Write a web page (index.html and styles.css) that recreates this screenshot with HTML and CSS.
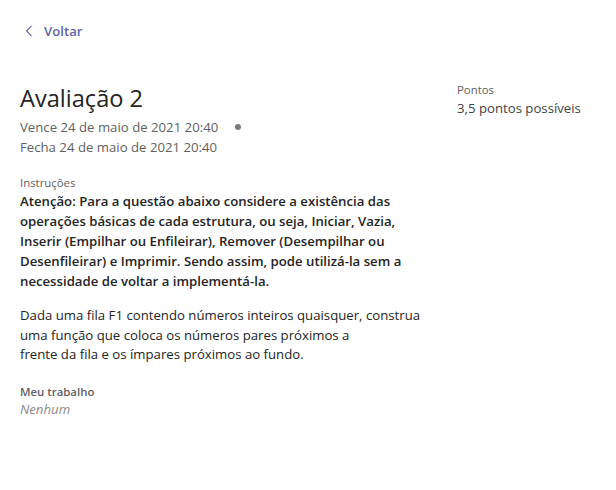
FILE: index.html
```html
<!DOCTYPE html>
<html lang="pt">
<head>
<meta charset="utf-8">
<link rel="stylesheet" href="styles.css">
</head>
<body>
<div class="page">
  <a class="back" href="#">
    <svg class="chev" width="8" height="12" viewBox="0 0 8 12"><path d="M6.5 0.8 L1.6 6 L6.5 11.2" fill="none" stroke="#6264a7" stroke-width="1.1"/></svg>
    <span>Voltar</span>
  </a>
  <div class="layout">
    <main class="main">
      <h1 class="title">Avaliação 2</h1>
      <div class="meta">
        <div class="meta-row">Vence 24 de maio de 2021 20:40<span class="dot"></span></div>
        <div class="meta-row">Fecha 24 de maio de 2021 20:40</div>
      </div>
      <div class="label label-instr">Instruções</div>
      <div class="instr">
        <p class="strong">Atenção: Para a questão abaixo considere a existência das operações básicas de cada estrutura, ou seja, Iniciar, Vazia, Inserir (Empilhar ou Enfileirar), Remover (Desempilhar ou Desenfileirar) e Imprimir. Sendo assim, pode utilizá-la sem a necessidade de voltar a implementá-la.</p>
        <p class="plain">Dada uma fila F1 contendo números inteiros quaisquer, construa<br>uma função que coloca os números pares próximos a<br>frente da fila e os ímpares próximos ao fundo.</p>
      </div>
      <div class="label label-work">Meu trabalho</div>
      <div class="none">Nenhum</div>
    </main>
    <aside class="side">
      <div class="side-label">Pontos</div>
      <div class="side-value">3,5 pontos possíveis</div>
    </aside>
  </div>
</div>
</body>
</html>
```
FILE: styles.css
```css
html, body {
  margin: 0;
  padding: 0;
  background: #ffffff;
}
body {
  font-family: "Open Sans", "Noto Sans", sans-serif;
  color: #242424;
}
.page {
  padding: 20px 20px 0 20px;
}
.back {
  display: inline-flex;
  align-items: center;
  gap: 11px;
  padding-left: 5px;
  height: 22px;
  color: #6264a7;
  text-decoration: none;
  font-size: 13.2px;
  font-weight: 600;
}
.chev { display: block; }
.layout {
  display: flex;
  margin-top: 40px;
}
.main {
  width: 437px;
}
.title {
  margin: 0;
  font-size: 23.6px;
  font-weight: 400;
  line-height: 32px;
  color: #242424;
}
.meta {
  margin-top: 3px;
  font-size: 13.2px;
  line-height: 20px;
  color: #616161;
}
.meta-row {
  display: flex;
  align-items: center;
}
.dot {
  width: 6px;
  height: 6px;
  border-radius: 50%;
  background: #7a7a7a;
  margin-left: 17px;
}
.label {
  font-size: 11.4px;
  line-height: 16px;
  color: #616161;
}
.label-instr { margin-top: 18px; }
.instr {
  font-size: 13.2px;
  line-height: 20px;
  color: #242424;
}
.instr p { margin: 0; }
.strong { font-weight: 600; max-width: 400px; }
.plain { margin-top: 15px !important; line-height: 19.5px; }
.label-work { margin-top: 19px; font-weight: 600; }
.none {
  font-size: 13.2px;
  line-height: 18px;
  font-style: italic;
  color: #8a8a8a;
}
.side {
  padding-top: 0;
}
.side-label {
  font-size: 11.4px;
  line-height: 16px;
  color: #616161;
}
.side-value {
  font-size: 13.2px;
  line-height: 20px;
  color: #424242;
}
```
